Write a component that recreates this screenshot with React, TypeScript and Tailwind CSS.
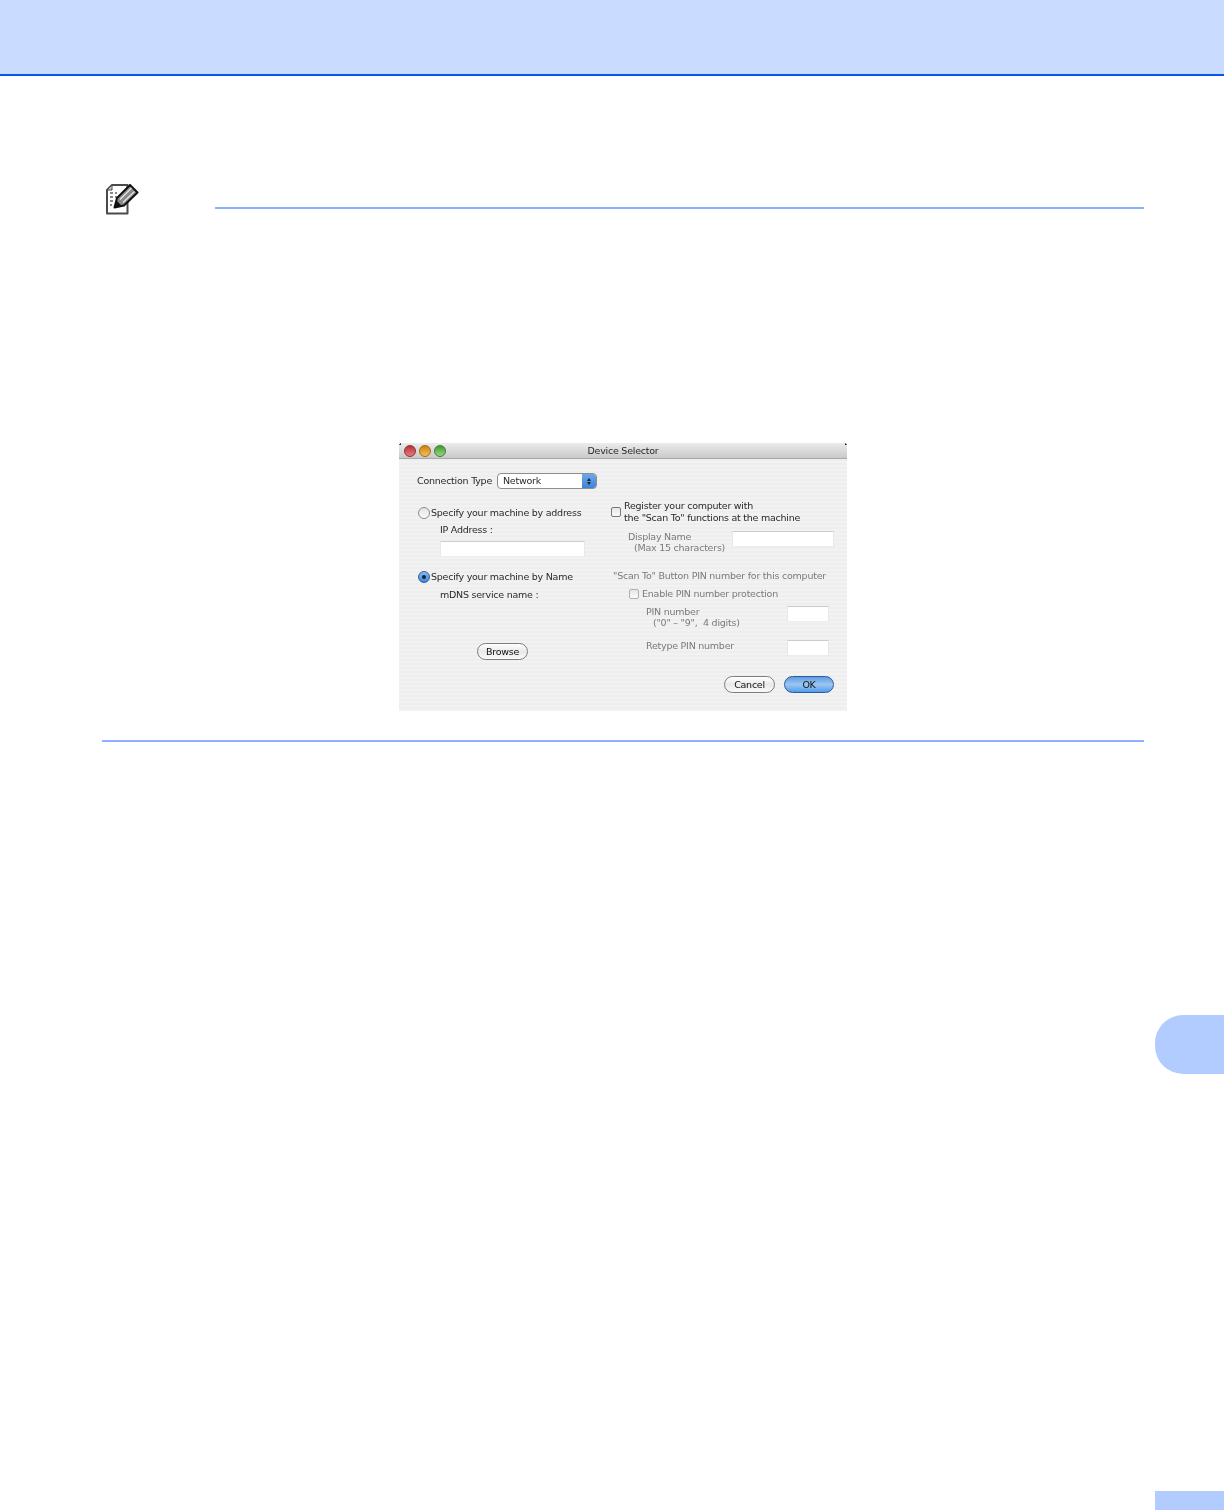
const uiFont = "font-['DejaVu_Sans',sans-serif] text-[9.5px] tracking-[-0.24px]";

function Radio({ checked }: { checked?: boolean }) {
  if (checked) {
    return (
      <span className="flex h-[12px] w-[12px] shrink-0 items-center justify-center rounded-full border border-[#2f5f9e] bg-gradient-to-b from-[#8fb8ea] to-[#3f86d8]">
        <span className="h-[4px] w-[4px] rounded-full bg-[#10243f]" />
      </span>
    );
  }
  return <span className="h-[12px] w-[12px] shrink-0 rounded-full border border-[#8c8c8c] bg-gradient-to-b from-[#e4e4e4] to-[#fbfbfb]" />;
}

function Checkbox({ dim }: { dim?: boolean }) {
  return (
    <span
      className={`h-[10px] w-[10px] shrink-0 rounded-[2px] border bg-gradient-to-b from-[#e6e6e6] to-[#fbfbfb] ${
        dim ? "border-[#b0b0b0]" : "border-[#777777]"
      }`}
    />
  );
}

function Field({ className }: { className: string }) {
  return <div className={`h-[16px] border border-t-[#cccccc] border-x-[#e8e8e8] border-b-[#ececec] bg-white ${className}`} />;
}

function PillButton({ label, primary, className }: { label: string; primary?: boolean; className: string }) {
  return (
    <div
      className={`flex h-[17px] items-center justify-center rounded-full border text-[#111111] ${
        primary
          ? "border-[#2a5c9c] bg-gradient-to-b from-[#5f9ce2] via-[#9cc6f0] to-[#4f9cec]"
          : "border-[#7d7d7d] bg-gradient-to-b from-[#ffffff] via-[#e9e9e9] to-[#fafafa]"
      } ${className}`}
    >
      {label}
    </div>
  );
}

function Light({ className }: { className: string }) {
  return <span className={`h-[12px] w-[12px] rounded-full border ${className}`} />;
}

function DeviceSelector() {
  return (
    <div className={`relative h-[268px] w-[448px] overflow-hidden rounded-t-[3px] leading-[14px] text-[#2a2a2a] blur-[0.4px] ${uiFont}`}>
      {/* title bar */}
      <div className="relative flex h-[16px] items-center justify-center border-b border-[#a8a8a8] bg-gradient-to-b from-[#ececec] to-[#c9c9c9]">
        <div className="absolute left-[5px] top-[2px] flex gap-[3px]">
          <Light className="border-[#8f3034] bg-gradient-to-b from-[#b5343a] to-[#e87880]" />
          <Light className="border-[#a06a18] bg-gradient-to-b from-[#d08210] to-[#f4c050]" />
          <Light className="border-[#3f7f35] bg-gradient-to-b from-[#3f9a32] to-[#98d880]" />
        </div>
        <span>Device Selector</span>
      </div>

      <div className="h-[252px] bg-[repeating-linear-gradient(180deg,#eeeeee_0px,#eeeeee_2px,#f2f2f2_2px,#f2f2f2_4px)] pl-[18px] pt-[13px]">
        {/* connection type */}
        <div className="flex h-[18px] items-center">
          <span>Connection Type</span>
          <div className="ml-[5px] flex h-[16px] w-[100px] items-center justify-between rounded-[4px] border border-[#8e8e8e] bg-white pl-[5px]">
            <span>Network</span>
            <span className="flex h-[14px] w-[14px] flex-col items-center justify-center gap-[1px] rounded-r-[3px] bg-gradient-to-b from-[#6fa8e6] to-[#3f82d6]">
              <span className="h-0 w-0 border-x-[2.5px] border-b-[3px] border-x-transparent border-b-[#10243f]" />
              <span className="h-0 w-0 border-x-[2.5px] border-t-[3px] border-x-transparent border-t-[#10243f]" />
            </span>
          </div>
        </div>

        <div className="flex">
          {/* left column */}
          <div className="w-[193px]">
            <div className="mt-[16px] flex h-[14px] items-center gap-[1px] pl-[1px]">
              <Radio />
              <span>Specify your machine by address</span>
            </div>
            <div className="ml-[23px] mt-[3px] h-[14px]">IP Address :</div>
            <Field className="ml-[23px] mt-[4px] w-[145px]" />
            <div className="mt-[13px] flex h-[14px] items-center gap-[1px] pl-[1px]">
              <Radio checked />
              <span>Specify your machine by Name</span>
            </div>
            <div className="ml-[23px] mt-[4px] h-[14px]">mDNS service name :</div>
            <PillButton label="Browse" className="ml-[60px] mt-[41px] w-[51px]" />
          </div>

          {/* right column */}
          <div className="w-[237px]">
            <div className="mt-[10px] flex h-[24px] items-center gap-[3px] pl-[1px] leading-[12px]">
              <Checkbox />
              <div>
                <div>Register your computer with</div>
                <div>the "Scan To" functions at the machine</div>
              </div>
            </div>
            <div className="mt-[7px] flex h-[23px] leading-[11px] text-[#7a7a7a]">
              <div className="ml-[18px] w-[104px]">
                <div>Display Name</div>
                <div className="pl-[6px]">(Max 15 characters)</div>
              </div>
              <Field className="w-[102px]" />
            </div>
            <div className="ml-[3px] mt-[15px] h-[14px] text-[#7a7a7a]">"Scan To" Button PIN number for this computer</div>
            <div className="ml-[19px] mt-[4px] flex h-[14px] items-center gap-[3px] text-[#7a7a7a]">
              <Checkbox dim />
              <span>Enable PIN number protection</span>
            </div>
            <div className="mt-[5px] flex h-[23px] leading-[11px] text-[#7a7a7a]">
              <div className="ml-[36px] w-[141px]">
                <div>PIN number</div>
                <div className="pl-[7px]">("0" – "9",&nbsp;&nbsp;4 digits)</div>
              </div>
              <Field className="w-[42px]" />
            </div>
            <div className="mt-[11px] flex h-[16px] leading-[12px] text-[#7a7a7a]">
              <div className="ml-[36px] w-[141px]">Retype PIN number</div>
              <Field className="w-[42px]" />
            </div>
            <div className="ml-[114px] mt-[20px] flex gap-[9px]">
              <PillButton label="Cancel" className="w-[51px]" />
              <PillButton label="OK" primary className="w-[50px]" />
            </div>
          </div>
        </div>
      </div>

      <span className="absolute left-0 top-0 h-[2px] w-[2px] bg-[#222222]" />
      <span className="absolute right-0 top-0 h-[2px] w-[2px] bg-[#222222]" />
    </div>
  );
}

function NoteIcon() {
  return (
    <svg width="34" height="32" viewBox="0 0 34 32" fill="none">
      <path d="M6 1h15.5v28.5H1V6z" fill="#fff" stroke="#4a4a4a" strokeWidth="2" strokeLinejoin="round" />
      <path d="M6 1v5H1z" fill="#c8c8c8" stroke="#4a4a4a" strokeWidth="1" />
      <path d="M4 9h3M9 9h2M4 13h3M9 13h2M4 17h3M4 21h2" stroke="#8a8a8a" strokeWidth="1.8" />
      <path d="M8.5 23.5 11 14 24 1l7.5 7.5L18 21.5z" fill="#8a8a8a" stroke="#111" strokeWidth="2" strokeLinejoin="round" />
      <path d="M14 15.5 25.5 4M17 18.5 28.5 7.5" stroke="#e4e4e4" strokeWidth="1.3" />
      <path d="M8.5 23.5 10.5 16.5 15.5 21.5z" fill="#111" />
    </svg>
  );
}

export default function App() {
  return (
    <div className="relative h-[1510px] w-full overflow-hidden bg-white">
      <div className="h-[76px] border-b-2 border-[#0a55e8] bg-[#c9dbff]" />

      <main className="pl-[102px] pr-[80px]">
        <div className="mt-[108px] flex h-[33px] items-start">
          <div className="ml-[4px] w-[109px]">
            <NoteIcon />
          </div>
          <div className="mt-[23px] h-[2px] flex-1 bg-[#8cb0ff]" />
        </div>

        <div className="ml-[297px] mt-[226px]">
          <DeviceSelector />
        </div>

        <div className="mt-[29px] h-[2px] bg-[#8cb0ff]" />
      </main>

      {/* chapter tab, over the page margin */}
      <div className="absolute right-0 top-[1015px] h-[59px] w-[69px] rounded-l-[28px] bg-[#b3ccff]" />
      <div className="absolute bottom-0 right-0 h-[19px] w-[69px] bg-[#b3ccff]" />
    </div>
  );
}
